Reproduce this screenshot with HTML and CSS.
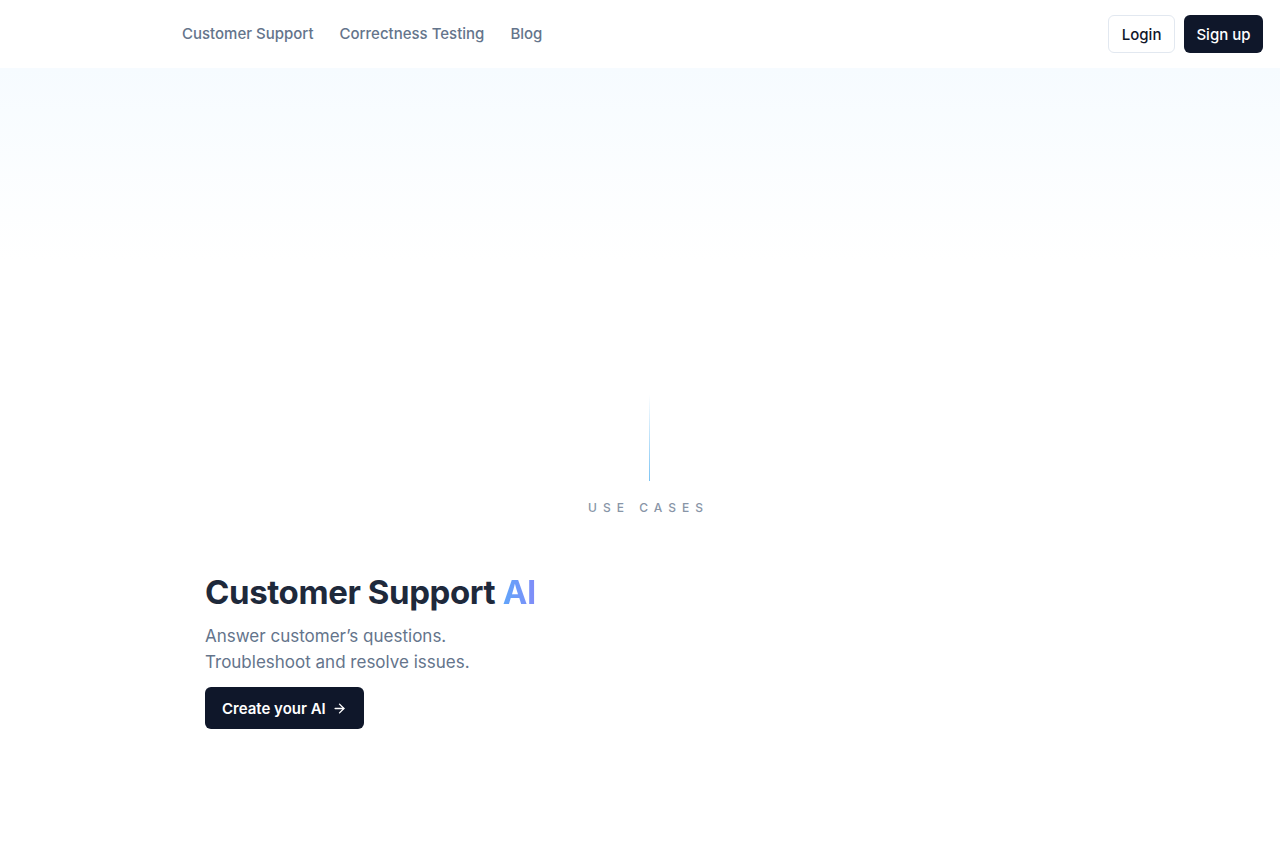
FILE: index.html
```html
<!doctype html>
<html>
<head>
<meta charset="utf-8">
<title>Customer Support AI</title>
<link rel="stylesheet" href="styles.css">
</head>
<body>
<header class="top">
	<nav class="nav">
		<a href="javascript:;">Customer Support</a>
		<a href="javascript:;">Correctness Testing</a>
		<a href="javascript:;">Blog</a>
	</nav>
	<div class="auth">
		<a href="javascript:;" class="btn-login">Login</a>
		<a href="javascript:;" class="btn-signup">Sign up</a>
	</div>
</header>
<section class="hero"></section>
<section class="cases">
	<div class="line"></div>
	<p class="label">USE CASES</p>
	<div class="case">
		<h2>Customer Support <span>AI</span></h2>
		<p>Answer customer’s questions.<br>Troubleshoot and resolve issues.</p>
		<a href="javascript:;" class="btn-create">Create your AI
			<svg width="15" height="15" viewBox="0 0 24 24" fill="none" stroke="currentColor" stroke-width="2.2" stroke-linecap="round" stroke-linejoin="round"><path d="M5 12h14"/><path d="M12 5l7 7-7 7"/></svg>
		</a>
	</div>
</section>
</body>
</html>
```
FILE: styles.css
```css
*{margin:0; padding:0; box-sizing:border-box;}
a{text-decoration:none;}
body{font-family:Inter, "Noto Sans", sans-serif; background:#fff; color:#1e293b;}
.top{height:68px; display:flex; align-items:center; justify-content:space-between; padding:0 17px 0 182px;}
.nav{display:flex; gap:26px;}
.nav a{font-size:15px; font-weight:500; color:#64748b; margin-top:-1px;}
.auth{display:flex; gap:9px;}
.auth a{display:flex; align-items:center; height:38px; padding:0 12.5px; border-radius:6px; font-size:15px; font-weight:500;}
.btn-login{border:1px solid #e2e8f0; color:#0f172a; background:#fff;}
.btn-signup{background:#0f172a; color:#fff;}
.hero{height:320px; background:linear-gradient(#f6fbff, #fff 60%);}
.cases{display:flex; flex-direction:column; align-items:center;}
.line{width:1px; height:87px; margin-top:6px; margin-left:18px; background:linear-gradient(rgba(125,196,244,0), #7cc4f4);}
.label{margin-top:19px; font-size:12px; font-weight:500; letter-spacing:0.5em; color:#8895a7; margin-left:17px;}
.case{align-self:flex-start; margin:57px 0 0 205px;}
.case h2{font-size:33px; font-weight:700; color:#1e293b; letter-spacing:-0.4px;}
.case h2 span{background:linear-gradient(90deg, #60a5fa, #818cf8); -webkit-background-clip:text; background-clip:text; color:transparent;}
.case p{margin-top:11px; font-size:17px; line-height:26px; color:#64748b;}
.btn-create{display:inline-flex; align-items:center; gap:6px; margin-top:12px; height:42px; padding:0 17px; border-radius:6px; background:#0f172a; color:#fff; font-size:15px; font-weight:600;}
```
